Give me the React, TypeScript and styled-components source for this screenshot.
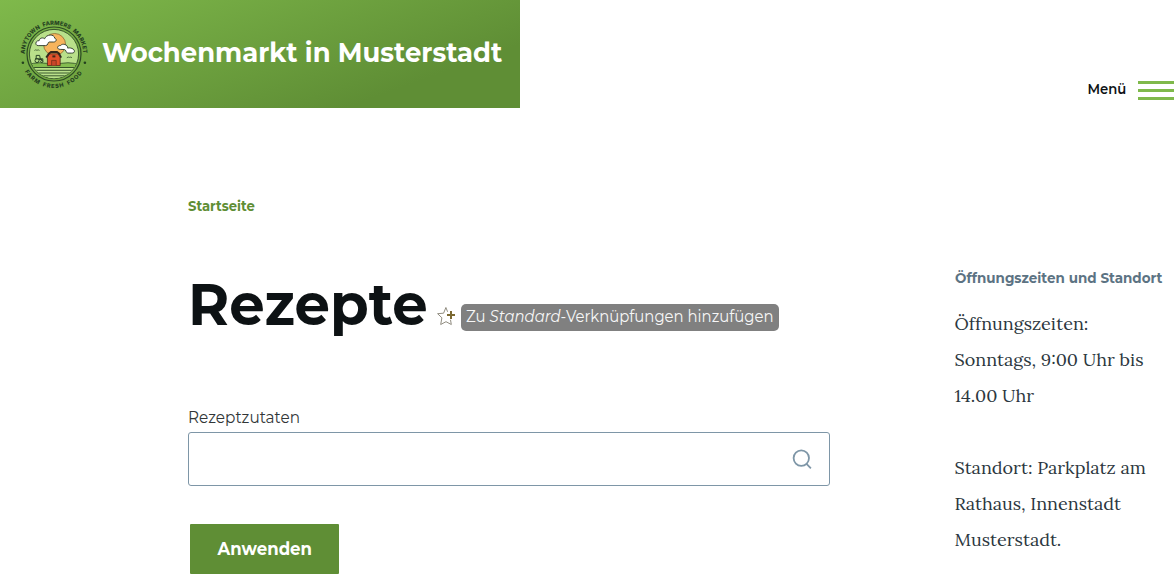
import React from "react";
import styled, { createGlobalStyle } from "styled-components";

const GlobalStyle = createGlobalStyle`
  *, *::before, *::after { box-sizing: border-box; }
  body {
    margin: 0;
    background: #fff;
    color: #313637;
    font-family: Metropolis, Montserrat, Inter, "Liberation Sans", sans-serif;
    overflow: hidden;
  }
`;

const Page = styled.div`
  height: 574px;
  overflow: hidden;
`;

const Condensed = styled.span<{ $scale: number; $origin?: string }>`
  display: inline-block;
  transform: scaleX(${(p) => p.$scale});
  transform-origin: ${(p) => p.$origin ?? "left"} center;
  white-space: nowrap;
`;

const Header = styled.header`
  display: flex;
  justify-content: space-between;
  height: 108px;
`;

const Brand = styled.a`
  display: flex;
  align-items: center;
  width: 520px;
  height: 108px;
  padding-left: 18px;
  background: linear-gradient(160deg, #7fb94b 0%, #5f8e35 78.66%);
`;

const SiteName = styled.span`
  width: 400px;
  margin: -2px 0 0 12px;
  color: #fff;
  font-size: 27px;
  font-weight: 700;
  line-height: 36px;
`;

const MenuButton = styled.button`
  display: flex;
  gap: 12px;
  align-items: center;
  align-self: flex-end;
  height: 36px;
  padding: 0;
  border: 0;
  background: none;
  color: #0d1214;
  font: 600 14px/18px Metropolis, Montserrat, Inter, sans-serif;
`;

const MenuLabel = styled.span`
  padding-bottom: 2px;
`;

const Bars = styled.span`
  display: flex;
  flex-direction: column;
  gap: 5px;
  width: 36px;
`;

const Bar = styled.span`
  height: 3px;
  background: #7fb94b;
`;

const Layout = styled.div`
  display: grid;
  grid-template-columns: 642px 220px;
  column-gap: 124.5px;
  padding: 88px 0 0 188px;
`;

const Main = styled.main``;

const Breadcrumb = styled.a`
  display: block;
  color: #5f8e35;
  font-size: 13.8px;
  font-weight: 700;
  line-height: 20px;
`;

const TitleRow = styled.div`
  display: flex;
  align-items: flex-start;
  height: 72px;
  margin-top: 52px;
`;

const Title = styled.h1`
  flex: none;
  width: 249px;
  margin: 0;
  color: #0d1214;
  font-size: 58.5px;
  font-weight: 700;
  line-height: 72px;
`;

const Shortcut = styled.a`
  display: flex;
  gap: 5px;
  align-items: flex-start;
  height: 27px;
  margin-top: 36px;
`;

const ShortcutLabel = styled.span`
  width: 318px;
  height: 27px;
  padding: 0 5px;
  border-radius: 5px;
  background: #808080;
  color: #f7f7f7;
  font-size: 15.8px;
  line-height: 26px;
  white-space: nowrap;
`;

const Label = styled.label`
  display: block;
  margin-top: 68px;
  font-size: 15.8px;
  line-height: 20px;
`;

const SearchField = styled.div`
  display: flex;
  align-items: center;
  justify-content: flex-end;
  height: 54px;
  margin-top: 4px;
  padding-right: 17px;
  border: 1px solid #7e96a7;
  border-radius: 3px;
`;

const Input = styled.input`
  flex: 1;
  min-width: 0;
  height: 100%;
  border: 0;
  outline: 0;
  background: transparent;
`;

const Submit = styled.button`
  display: block;
  width: 149px;
  height: 50px;
  margin: 38px 0 0 2px;
  padding: 0;
  border: 0;
  border-radius: 1px;
  background: #5f8e35;
  color: #fff;
  font: 700 17.8px/50px Metropolis, Montserrat, Inter, sans-serif;
`;

const Sidebar = styled.aside`
  padding-top: 72px;
`;

const SidebarTitle = styled.h2`
  margin: 0 0 18px;
  color: #5c7383;
  font-size: 13.8px;
  font-weight: 700;
  line-height: 20px;
`;

const SidebarText = styled.p`
  margin: 0 0 36px;
  color: #2c373e;
  font: 18px/36px Lora, "Liberation Serif", serif;
  white-space: nowrap;
`;

const LogoImage = styled.svg`
  flex: none;
`;

const StarImage = styled.svg`
  flex: none;
  margin-top: 3px;
`;

const Logo = () => (
  <LogoImage width="72" height="72" viewBox="18 18 72 72" aria-hidden="true">
    <defs>
      <path id="ring-top" d="M24.8 54A29.2 29.2 0 0 1 83.2 54" />
      <path id="ring-bottom" d="M24.9 71.5A33.9 33.9 0 0 0 83.1 71.5" />
      <clipPath id="scene"><circle cx="54" cy="54" r="24.2" /></clipPath>
    </defs>
    <g fill="#24401f" fontFamily="Inter, sans-serif" fontWeight="800" fontSize="5.7" wordSpacing="1.8">
      <text textLength="91" lengthAdjust="spacing"><textPath href="#ring-top">ANYTOWN FARMERS MARKET</textPath></text>
      <text textLength="68" lengthAdjust="spacing"><textPath href="#ring-bottom">FARM FRESH FOOD</textPath></text>
      <circle cx="22.9" cy="62.8" r="1.3" />
      <circle cx="84.9" cy="62.8" r="1.3" />
    </g>
    <circle cx="54" cy="54" r="27" fill="none" stroke="#2c4a24" strokeWidth="1.2" />
    <circle cx="54" cy="54" r="24.6" fill="#b9e08a" stroke="#2c4a24" strokeWidth="0.9" />
    <g clipPath="url(#scene)">
      <circle cx="54.6" cy="44.5" r="11" fill="#f7b45c" stroke="#81602c" strokeWidth="0.7" />
      <path d="M28 65Q38 60.5 54 65Q69 60.5 80 65V80H28Z" fill="#84bd50" stroke="#2c4a24" strokeWidth="0.8" />
      <path d="M28 68H80V80H28Z" fill="#b9e08a" />
      <path d="M28 67.5H80M28 70.3H80M28 73H80M28 75.8H80" stroke="#2c4a24" strokeWidth="0.9" />
    </g>
    <path d="M38.2 45.6C34.8 45.6 35 40.6 39.2 40.6C39.7 37.4 43.6 37.5 44.6 38.8C46.3 34 54.3 33.8 54.8 38.3C57.4 39.2 56 42 53.7 42H49C47.8 42 48.3 45.6 45.6 45.6Z" fill="#fff" stroke="#283729" strokeWidth="0.9" />
    <path d="M60.2 49.4C56.3 49.2 57 45.4 60.6 45.5C62.5 43 67.8 44.4 67.8 48.2C69.8 47.2 74.8 48.7 74.4 51.6C74 53.4 72 53.1 70 53.1H67.8C65.8 53.1 66.3 49.5 64.2 49.5Z" fill="#fff" stroke="#283729" strokeWidth="0.9" />
    <path d="M47.4 57.2V65.6H60.2V57.2L58 53.8H49.6Z" fill="#e2512b" stroke="#4a2a1a" strokeWidth="0.8" />
    <path d="M46.2 57.6L49 53.4L51 52H57L59 53.4L61.2 57.6" fill="none" stroke="#33271c" strokeWidth="1.8" />
    <path d="M51.6 65.4V60.4H56.2V65.4" fill="#c8452a" stroke="#6a2c1a" strokeWidth="0.7" />
    <rect x="52.4" y="55.4" width="3" height="2" fill="#402819" />
    <g fill="none" stroke="#2a4525" strokeWidth="1">
      <path d="M36.2 58.8V55.4H39.6L40.3 58.8H42.8V61.5M35 58.8H41M39 59.5H42" />
      <circle cx="37" cy="60.6" r="2" />
      <circle cx="41.8" cy="61.5" r="1.1" />
      <path d="M34.4 50.5Q35.6 49.3 37 50.3Q38.2 49.3 39.5 50.5M66.8 57.8Q68.2 56.5 69.6 57.4Q71 56.5 72 57.8" strokeWidth="0.7" />
    </g>
  </LogoImage>
);

const StarPlus = () => (
  <StarImage width="19" height="19" viewBox="0 0 19 19" aria-hidden="true">
    <path d="M10.6 4.8L8.9 0.5L6.6 6.2L0.6 6.7L4.9 10.8L3.7 17.5L9 14.7L14.3 17.5L13.5 12.8" fill="none" stroke="#858073" strokeWidth="0.9" strokeLinejoin="round" />
    <path d="M14 4V12M10 8H18" stroke="#7b6932" strokeWidth="2" />
  </StarImage>
);

const SearchIcon = () => (
  <svg width="20" height="21" viewBox="0 0 20 21" fill="none" stroke="#7e96a7" strokeWidth="1.8" aria-hidden="true">
    <circle cx="9.3" cy="9.1" r="7.7" />
    <path d="M14.3 14.7L18.9 19.3" />
  </svg>
);

export default function App() {
  return (
    <Page>
      <GlobalStyle />
      <Header>
        <Brand>
          <Logo />
          <SiteName><Condensed $scale={0.959}>Wochenmarkt in Musterstadt</Condensed></SiteName>
        </Brand>
        <MenuButton>
          <MenuLabel><Condensed $scale={0.94} $origin="right">Menü</Condensed></MenuLabel>
          <Bars><Bar /><Bar /><Bar /></Bars>
        </MenuButton>
      </Header>
      <Layout>
        <Main>
          <Breadcrumb><Condensed $scale={0.955}>Startseite</Condensed></Breadcrumb>
          <TitleRow>
            <Title><Condensed $scale={0.96}>Rezepte</Condensed></Title>
            <Shortcut>
              <StarPlus />
              <ShortcutLabel>
                <Condensed $scale={0.942}>Zu <em>Standard</em>-Verknüpfungen hinzufügen</Condensed>
              </ShortcutLabel>
            </Shortcut>
          </TitleRow>
          <Label htmlFor="ingredients"><Condensed $scale={0.966}>Rezeptzutaten</Condensed></Label>
          <SearchField>
            <Input id="ingredients" />
            <SearchIcon />
          </SearchField>
          <Submit><Condensed $scale={0.93} $origin="center">Anwenden</Condensed></Submit>
        </Main>
        <Sidebar>
          <SidebarTitle><Condensed $scale={0.978}>Öffnungszeiten und Standort</Condensed></SidebarTitle>
          <SidebarText>Öffnungszeiten:<br />Sonntags, 9:00 Uhr bis<br />14.00 Uhr</SidebarText>
          <SidebarText>Standort: Parkplatz am<br />Rathaus, Innenstadt<br />Musterstadt.</SidebarText>
        </Sidebar>
      </Layout>
    </Page>
  );
}
